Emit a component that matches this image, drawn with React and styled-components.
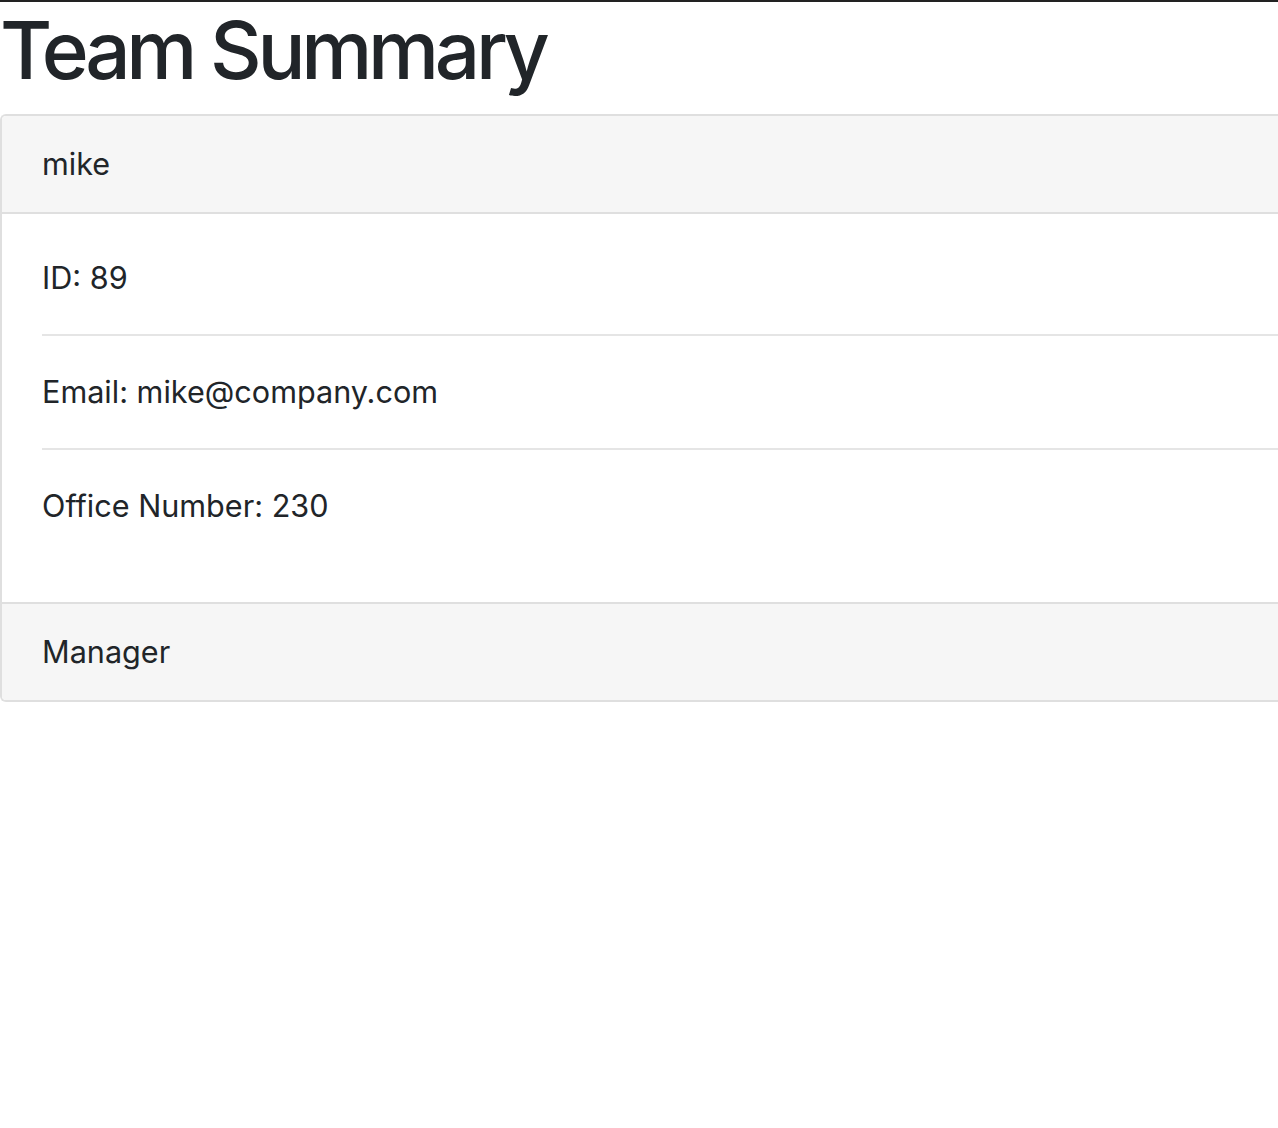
import React from "react";
import styled, { createGlobalStyle } from "styled-components";

const GlobalStyle = createGlobalStyle`
  html, body {
    margin: 0;
    padding: 0;
    overflow-x: hidden;
    background: #fff;
  }
  body {
    font-family: Inter, "Liberation Sans", Arial, sans-serif;
    color: #212529;
  }
`;

const employee = {
  name: "mike",
  role: "Manager",
  details: [
    { label: "ID", value: "89" },
    { label: "Email", value: "mike@company.com" },
    { label: "Office Number", value: "230" },
  ],
};

const App = () => {
  return (
    <Page>
      <GlobalStyle />
      <Title>Team Summary</Title>
      <Card>
        <CardHeader>{employee.name}</CardHeader>
        <CardBody>
          <DetailList>
            {employee.details.map((d, i) => (
              <DetailItem key={i}>
                {d.label}: {d.value}
              </DetailItem>
            ))}
          </DetailList>
        </CardBody>
        <CardFooter>{employee.role}</CardFooter>
      </Card>
    </Page>
  );
};

const Page = styled.main`
  border-top: 2px solid #222;
  min-height: 1126px;
`;

const Title = styled.h1`
  margin: 0 0 16px;
  font-size: 80px;
  font-weight: 500;
  line-height: 96px;
  letter-spacing: -4.3px;
  color: #212529;
`;

const Card = styled.section`
  border: 2px solid #dfdfdf;
  border-right: none;
  border-radius: 6px 0 0 6px;
  margin-right: -10px;
  font-size: 30.6px;
  line-height: 48px;
  overflow: hidden;
`;

const CardHeader = styled.header`
  background: #f6f6f6;
  padding: 24px 40px;
  border-bottom: 2px solid #dfdfdf;
`;

const CardBody = styled.div`
  padding: 40px 0 40px 40px;
  background: #fff;
`;

const DetailList = styled.ul`
  list-style: none;
  margin: 0;
  padding: 0;
`;

const DetailItem = styled.li`
  padding: 32px 0;
  border-bottom: 2px solid #e5e5e5;
  &:first-child {
    padding-top: 0;
  }
  &:last-child {
    border-bottom: none;
  }
`;

const CardFooter = styled.footer`
  background: #f6f6f6;
  padding: 24px 40px;
  border-top: 2px solid #dfdfdf;
`;

export default App;
